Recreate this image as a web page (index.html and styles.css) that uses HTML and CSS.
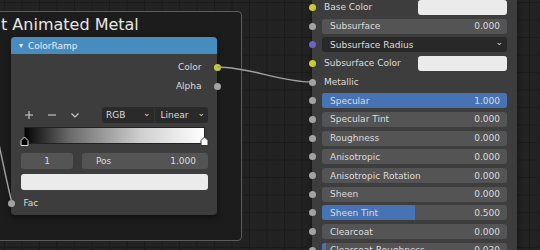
FILE: index.html
```html
<!DOCTYPE html>
<html lang="en">
<head>
    <meta charset="UTF-8">
    <title>Node Editor</title>
    <link rel="stylesheet" href="styles.css">
</head>
<body>
    <div class="canvas">
        <!-- Frame -->
        <div class="frame"></div>
        <div class="frame-title">t Animated Metal</div>

        <!-- ColorRamp node -->
        <div class="node ramp">
            <div class="node-header"><span class="arrow">▾</span>ColorRamp</div>
            <div class="outputs">
                <div class="out-row">Color<span class="socket yellow"></span></div>
                <div class="out-row">Alpha<span class="socket gray"></span></div>
            </div>

            <div class="ramp-tools">
                <svg class="tool" width="10" height="10" viewBox="0 0 10 10"><path d="M5 1v8M1 5h8" stroke="#cfcfcf" stroke-width="1.1"/></svg>
                <svg class="tool" width="10" height="10" viewBox="0 0 10 10"><path d="M1 5h8" stroke="#cfcfcf" stroke-width="1.1"/></svg>
                <svg class="tool" width="10" height="10" viewBox="0 0 10 10"><path d="M1.5 3.5l3.5 3.5 3.5-3.5" fill="none" stroke="#cfcfcf" stroke-width="1.1"/></svg>
                <div class="ramp-menus">
                    <div class="menu">RGB<span class="chev">⌄</span></div>
                    <div class="menu">Linear<span class="chev">⌄</span></div>
                </div>
            </div>

            <div class="ramp-bar">
                <svg class="marker left" width="9" height="10" viewBox="0 0 9 10"><path d="M1 4.5 4.5 1 8 4.5V9.5H1Z" fill="#000" stroke="#ddd" stroke-width="1"/></svg>
                <svg class="marker right" width="9" height="10" viewBox="0 0 9 10"><path d="M1 4.5 4.5 1 8 4.5V9.5H1Z" fill="#fff" stroke="#333" stroke-width="1"/></svg>
            </div>

            <div class="ramp-fields">
                <div class="field index">1</div>
                <div class="field pos"><span>Pos</span><span>1.000</span></div>
            </div>
            <div class="swatch wide"></div>

            <div class="in-row"><span class="socket gray"></span>Fac</div>
        </div>

        <!-- Principled BSDF node (partial) -->
        <div class="node bsdf">
            <div class="row"><span class="socket yellow"></span><div class="label">Base Color</div><div class="swatch"></div></div>
            <div class="row"><span class="socket gray"></span><div class="field"><span>Subsurface</span><span>0.000</span></div></div>
            <div class="row"><span class="socket purple"></span><div class="field dropdown"><span>Subsurface Radius</span><span class="chev">⌄</span></div></div>
            <div class="row"><span class="socket yellow"></span><div class="label">Subsurface Color</div><div class="swatch"></div></div>
            <div class="row"><span class="socket gray"></span><div class="label">Metallic</div></div>
            <div class="row"><span class="socket gray"></span><div class="field"><div class="fill" style="width: 100%"></div><span>Specular</span><span>1.000</span></div></div>
            <div class="row"><span class="socket gray"></span><div class="field"><span>Specular Tint</span><span>0.000</span></div></div>
            <div class="row"><span class="socket gray"></span><div class="field"><span>Roughness</span><span>0.000</span></div></div>
            <div class="row"><span class="socket gray"></span><div class="field"><span>Anisotropic</span><span>0.000</span></div></div>
            <div class="row"><span class="socket gray"></span><div class="field"><span>Anisotropic Rotation</span><span>0.000</span></div></div>
            <div class="row"><span class="socket gray"></span><div class="field"><span>Sheen</span><span>0.000</span></div></div>
            <div class="row"><span class="socket gray"></span><div class="field"><div class="fill" style="width: 50%"></div><span>Sheen Tint</span><span>0.500</span></div></div>
            <div class="row"><span class="socket gray"></span><div class="field"><span>Clearcoat</span><span>0.000</span></div></div>
            <div class="row"><span class="socket gray"></span><div class="field"><div class="fill" style="width: 2%"></div><span>Clearcoat Roughness</span><span>0.030</span></div></div>
        </div>

        <!-- Links -->
        <svg class="links" width="540" height="250" viewBox="0 0 540 250">
            <path d="M217 67 C 250 67, 280 82, 312 82" fill="none" stroke="#a0a0a0" stroke-width="1.4"/>
            <path d="M12 203 C 6 180, 0 150, -12 90" fill="none" stroke="#a0a0a0" stroke-width="1.4"/>
        </svg>
    </div>
</body>
</html>
```

FILE: styles.css
```css
body {
    margin: 0;
    background: #212121;
    font-family: "DejaVu Sans", sans-serif;
    font-size: 9px;
    color: #dcdcdc;
}
.canvas {
    position: relative;
    width: 540px;
    height: 250px;
    overflow: hidden;
    background-color: #222;
    background-image:
        linear-gradient(to right, #1a1a1a 1px, transparent 1px),
        linear-gradient(to bottom, #1a1a1a 1px, transparent 1px);
    background-size: 17.5px 17.5px;
    background-position: 4px 2px;
}
.frame {
    position: absolute;
    left: -20px;
    top: 11px;
    width: 260px;
    height: 228px;
    border: 1.5px solid #5c5c5c;
    border-radius: 4px;
    background: #1c1c1c;
}
.frame-title {
    position: absolute;
    left: 1px;
    top: 17px;
    font-size: 16px;
    line-height: 16px;
    color: #e6e6e6;
}
.node {
    position: absolute;
    background: #3d3d3d;
    border-radius: 4px;
    box-shadow: 0 3px 6px rgba(0, 0, 0, 0.45);
}
.socket {
    display: inline-block;
    width: 7px;
    height: 7px;
    border-radius: 50%;
    flex: none;
}
.socket.yellow { background: #c7cc38; }
.socket.gray { background: #a3a3a3; }
.socket.purple { background: #6a63c9; }

/* ColorRamp */
.ramp {
    left: 11px;
    top: 37px;
    width: 206px;
    height: 178px;
}
.node-header {
    height: 17px;
    display: flex;
    align-items: center;
    background: #468cbe;
    border-radius: 4px 4px 0 0;
    padding-left: 8px;
    color: #e8eef4;
}
.arrow {
    font-size: 8px;
    margin-right: 5px;
}
.outputs {
    padding-top: 3.5px;
}
.out-row {
    height: 19px;
    display: flex;
    align-items: center;
    justify-content: flex-end;
    gap: 12px;
    margin-right: -3.5px;
}
.ramp-tools {
    display: flex;
    align-items: center;
    height: 16px;
    margin: 11.5px 9px 0 10px;
}
.tool {
    margin-left: 3px;
    margin-right: 10px;
}
.ramp-menus {
    display: flex;
    margin-left: auto;
    width: 106px;
    height: 16px;
    background: #2a2a2a;
    border-radius: 3px;
}
.menu {
    flex: 1;
    display: flex;
    align-items: center;
    justify-content: space-between;
    padding: 0 3px 0 4px;
}
.menu + .menu {
    border-left: 1px solid #333;
    padding-left: 6px;
}
.chev {
    font-size: 9px;
    line-height: 9px;
    margin-top: -4px;
}
.ramp-bar {
    position: relative;
    height: 15px;
    margin: 4px 12px 0 13px;
    background: linear-gradient(to right, #050505, #6a6a6a 25%, #cfcfcf 65%, #fff);
    border: 1px solid #222;
}
.marker {
    position: absolute;
    top: 8px;
}
.marker.left { left: -5px; }
.marker.right { right: -5px; }
.ramp-fields {
    display: flex;
    gap: 9px;
    margin: 9px 9px 0 10px;
}
.ramp-fields .field {
    height: 16px;
}
.field.index {
    flex: none;
    width: 52px;
    padding: 0;
    justify-content: center;
}
.field.pos {
    flex: 1;
    padding: 0 12px 0 14px;
}
.swatch.wide {
    height: 16px;
    margin: 5px 9px 0 10px;
}
.in-row {
    height: 16px;
    display: flex;
    align-items: center;
    gap: 9px;
    margin: 5px 0 0 -3.5px;
}

/* Shared widgets */
.field {
    position: relative;
    flex: 1;
    height: 15px;
    display: flex;
    align-items: center;
    justify-content: space-between;
    padding: 0 7px 0 8px;
    background: #545454;
    border-radius: 3px;
    overflow: hidden;
}
.field span {
    position: relative;
}
.fill {
    position: absolute;
    left: 0;
    top: 0;
    bottom: 0;
    background: #4772b3;
}
.field.dropdown {
    background: #282828;
    padding-right: 4px;
}
.swatch {
    height: 15px;
    background: #ebebeb;
    border-radius: 3px;
}

/* Principled BSDF */
.bsdf {
    left: 312px;
    top: -2px;
    width: 205px;
    height: 280px;
    border-radius: 0;
}
.row {
    height: 18.7px;
    display: flex;
    align-items: center;
    padding-right: 10px;
}
.row .socket {
    margin-left: -3.5px;
    margin-right: 6.5px;
}
.row .label {
    flex: 1;
    padding-left: 2px;
}
.row .swatch {
    width: 89px;
}
.links {
    position: absolute;
    left: 0;
    top: 0;
}
```
